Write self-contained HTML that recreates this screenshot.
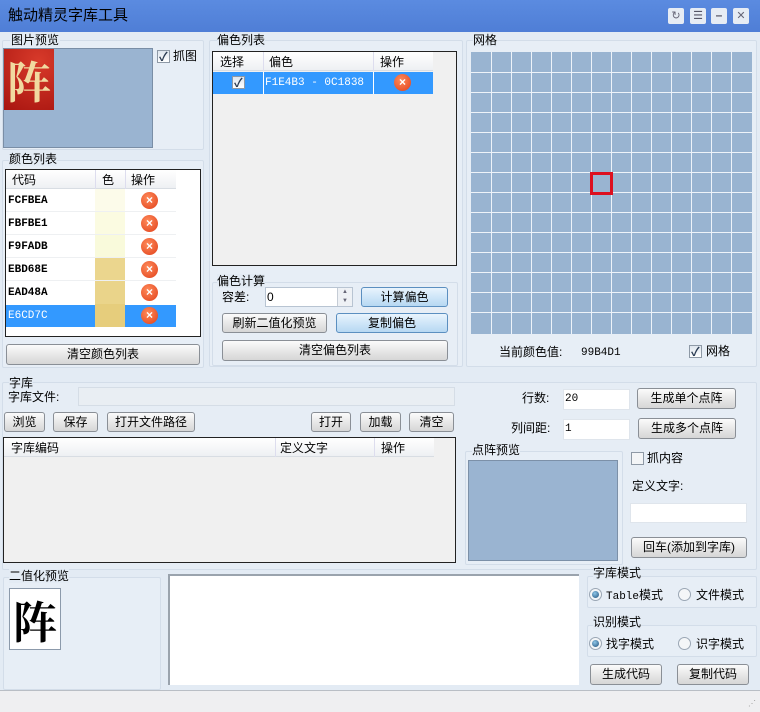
<!DOCTYPE html>
<html><head><meta charset="utf-8"><style>
*{box-sizing:border-box;margin:0;padding:0}
body{width:760px;height:712px;overflow:hidden;background:#e3ebf4;font-family:"Liberation Sans","Noto Sans CJK SC",sans-serif;font-size:12px;color:#000;position:relative}
.a{position:absolute}
.t{position:absolute;white-space:nowrap;line-height:14px}
.grp{position:absolute;border:1px solid #d3dde9;background:#e7eef6;border-radius:2px}
.btn{position:absolute;border:1px solid #8a8f96;border-radius:3px;background:linear-gradient(#fbfbfb,#e8e8e8 50%,#d6d6d6);text-align:center;line-height:18px;white-space:nowrap}
.btn.b{background:linear-gradient(#e9f4fd,#cfe6f8 50%,#b7d8f2);border-color:#5b8fc0}
.inp{position:absolute;background:#fff;border:1px solid #b8c4d2}
.cb{position:absolute;width:13px;height:13px;border:1px solid #8e99a6;background:linear-gradient(#dfe6ee,#fff)}
.cb.c::after{content:"✓";position:absolute;left:1px;top:-3px;font-size:12px;font-weight:bold;color:#2a3b52}
.x{position:absolute;width:17px;height:17px;border-radius:50%;background:radial-gradient(circle at 40% 35%,#ff8a5a,#e0401a);color:#fff;font-weight:bold;font-size:12px;line-height:17px;text-align:center}
.mono{font-family:"Liberation Mono",monospace;font-size:11px}
.hd{position:absolute;background:linear-gradient(#fff,#eef0f3);border-bottom:1px solid #d8dde3}
.rad{position:absolute;width:13px;height:13px;border-radius:50%;border:1px solid #9aa6b4;background:#f4f6f8}
.rad.on::after{content:"";position:absolute;left:2px;top:2px;width:7px;height:7px;border-radius:50%;background:radial-gradient(circle at 40% 35%,#8ec6e8,#1f4f7a)}
</style></head><body>
<!-- title -->
<div class="a" style="left:0;top:0;width:760px;height:32px;background:linear-gradient(#5b8be0,#4f7ed6)"></div>
<div class="t" style="left:8px;top:7px;font-size:15px;line-height:18px">触动精灵字库工具</div>
<div class="a" style="left:668px;top:8px;width:16px;height:16px;background:#e6ecf4;border-radius:2px;font-size:11px;text-align:center;line-height:16px;color:#667">↻</div>
<div class="a" style="left:690px;top:8px;width:16px;height:16px;background:#e6ecf4;border-radius:2px;font-size:11px;text-align:center;line-height:16px;color:#556">☰</div>
<div class="a" style="left:711px;top:8px;width:16px;height:16px;background:#e6ecf4;border-radius:2px;text-align:center;line-height:14px;color:#556;font-weight:bold">–</div>
<div class="a" style="left:733px;top:8px;width:16px;height:16px;background:#e6ecf4;border-radius:2px;font-size:11px;text-align:center;line-height:16px;color:#667">✕</div>

<!-- image preview -->
<div class="grp" style="left:2px;top:40px;width:202px;height:110px"></div>
<div class="t" style="left:10px;top:33px;background:#e3ebf4;padding:0 1px">图片预览</div>
<div class="a" style="left:3px;top:48px;width:150px;height:100px;background:#9ab4d1;border:1px solid #7a8ea6"></div>
<div class="a" style="left:4px;top:49px;width:50px;height:61px;background:radial-gradient(circle at 70% 20%,#d83a2a,#a81510);color:#f1d9a0;font-size:44px;line-height:60px;text-align:center;font-family:'Noto Serif CJK SC',serif;font-weight:bold">阵</div>
<div class="cb c" style="left:157px;top:50px"></div>
<div class="t" style="left:173px;top:49px">抓图</div>

<!-- color list -->
<div class="grp" style="left:2px;top:160px;width:202px;height:208px"></div>
<div class="t" style="left:9px;top:152px;background:#e3ebf4">颜色列表</div>
<div class="a" style="left:5px;top:169px;width:196px;height:168px;background:#fff;border:1px solid #222"></div>
<div class="hd" style="left:6px;top:170px;width:170px;height:19px"></div>
<div class="t" style="left:12px;top:173px">代码</div><div class="t" style="left:102px;top:173px">色</div><div class="t" style="left:131px;top:173px">操作</div>
<div class="a" style="left:95px;top:170px;width:1px;height:19px;background:#dde"></div><div class="a" style="left:125px;top:170px;width:1px;height:19px;background:#dde"></div>
<div id="rows"></div>
<div class="a" style="left:6px;top:305px;width:170px;height:22px;background:#3399ff"></div>
<div class="a" style="left:95px;top:189px;width:30px;height:23px;background:#fcfbea"></div>
<div class="a" style="left:95px;top:212px;width:30px;height:23px;background:#fbfbe1"></div>
<div class="a" style="left:95px;top:235px;width:30px;height:23px;background:#f9fadb"></div>
<div class="a" style="left:95px;top:258px;width:30px;height:23px;background:#ebd68e"></div>
<div class="a" style="left:95px;top:281px;width:30px;height:23px;background:#ead48a"></div>
<div class="a" style="left:95px;top:304px;width:30px;height:23px;background:#e6cd7c"></div>
<div class="a" style="left:6px;top:211px;width:170px;height:1px;background:#eef0f2"></div>
<div class="a" style="left:6px;top:234px;width:170px;height:1px;background:#eef0f2"></div>
<div class="a" style="left:6px;top:257px;width:170px;height:1px;background:#eef0f2"></div>
<div class="a" style="left:6px;top:280px;width:170px;height:1px;background:#eef0f2"></div>
<div class="t mono" style="left:8px;top:194px;font-weight:bold">FCFBEA</div>
<div class="t mono" style="left:8px;top:217px;font-weight:bold">FBFBE1</div>
<div class="t mono" style="left:8px;top:240px;font-weight:bold">F9FADB</div>
<div class="t mono" style="left:8px;top:263px;font-weight:bold">EBD68E</div>
<div class="t mono" style="left:8px;top:286px;font-weight:bold">EAD48A</div>
<div class="t mono" style="left:8px;top:309px;color:#fff">E6CD7C</div>
<div class="x" style="left:141px;top:192px">×</div>
<div class="x" style="left:141px;top:215px">×</div>
<div class="x" style="left:141px;top:238px">×</div>
<div class="x" style="left:141px;top:261px">×</div>
<div class="x" style="left:141px;top:284px">×</div>
<div class="x" style="left:141px;top:307px">×</div>
<div class="btn" style="left:6px;top:344px;width:194px;height:21px">清空颜色列表</div>

<!-- offset list -->
<div class="grp" style="left:209px;top:40px;width:254px;height:327px"></div>
<div class="t" style="left:217px;top:33px;background:#e3ebf4">偏色列表</div>
<div class="a" style="left:212px;top:51px;width:245px;height:215px;background:#f0f0f0;border:1px solid #222"></div>
<div class="hd" style="left:213px;top:52px;width:220px;height:19px"></div>
<div class="t" style="left:220px;top:55px">选择</div><div class="t" style="left:269px;top:55px">偏色</div><div class="t" style="left:380px;top:55px">操作</div>
<div class="a" style="left:263px;top:52px;width:1px;height:19px;background:#dde"></div><div class="a" style="left:373px;top:52px;width:1px;height:19px;background:#dde"></div>
<div class="a" style="left:213px;top:72px;width:220px;height:22px;background:#3399ff"></div>
<div class="a" style="left:263px;top:72px;width:1px;height:22px;background:#fff"></div><div class="a" style="left:373px;top:72px;width:1px;height:22px;background:#fff"></div>
<div class="cb c" style="left:232px;top:76px"></div>
<div class="t mono" style="left:265px;top:76px;color:#fff">F1E4B3 - 0C1838</div>
<div class="x" style="left:394px;top:74px">×</div>

<div class="grp" style="left:212px;top:282px;width:246px;height:84px"></div>
<div class="t" style="left:217px;top:274px;background:#e3ebf4">偏色计算</div>
<div class="t" style="left:222px;top:290px">容差:</div>
<div class="inp" style="left:265px;top:287px;width:88px;height:20px"></div>
<div class="t" style="left:267px;top:290px">0</div>
<div class="a" style="left:337px;top:288px;width:15px;height:18px;background:#eef1f5;border-left:1px solid #c5ccd5;font-size:6px;text-align:center;line-height:9px;color:#667">▲<br>▼</div>
<div class="btn b" style="left:361px;top:287px;width:87px;height:20px">计算偏色</div>
<div class="btn" style="left:222px;top:313px;width:105px;height:20px">刷新二值化预览</div>
<div class="btn b" style="left:336px;top:313px;width:112px;height:20px">复制偏色</div>
<div class="btn" style="left:222px;top:340px;width:226px;height:21px">清空偏色列表</div>

<!-- grid -->
<div class="grp" style="left:466px;top:40px;width:291px;height:327px"></div>
<div class="t" style="left:473px;top:33px;background:#e3ebf4">网格</div>
<svg class="a" style="left:471px;top:52px" width="281" height="282">
<rect width="281" height="282" fill="#99b4d1"/>
<g stroke="#eef3f9" stroke-width="1">
<path d="M20.5 0V282M40.5 0V282M60.5 0V282M80.5 0V282M100.5 0V282M120.5 0V282M140.5 0V282M160.5 0V282M180.5 0V282M200.5 0V282M220.5 0V282M240.5 0V282M260.5 0V282"/>
<path d="M0 20.5H281M0 40.5H281M0 60.5H281M0 80.5H281M0 100.5H281M0 120.5H281M0 140.5H281M0 160.5H281M0 180.5H281M0 200.5H281M0 220.5H281M0 240.5H281M0 260.5H281"/>
</g>
<rect x="120.5" y="121.5" width="20" height="20" fill="none" stroke="#dd1020" stroke-width="3"/>
</svg>
<div class="t" style="left:499px;top:345px">当前颜色值:</div>
<div class="t mono" style="left:581px;top:346px">99B4D1</div>
<div class="cb c" style="left:689px;top:345px"></div>
<div class="t" style="left:706px;top:344px">网格</div>

<!-- library -->
<div class="grp" style="left:2px;top:382px;width:755px;height:188px;background:#e6edf5"></div>
<div class="t" style="left:9px;top:376px;background:#e3ebf4">字库</div>
<div class="t" style="left:8px;top:390px">字库文件:</div>
<div class="a" style="left:78px;top:387px;width:377px;height:19px;background:#e9eef3;border:1px solid #d5dde6"></div>
<div class="btn" style="left:4px;top:412px;width:41px;height:20px">浏览</div>
<div class="btn" style="left:53px;top:412px;width:45px;height:20px">保存</div>
<div class="btn" style="left:107px;top:412px;width:88px;height:20px">打开文件路径</div>
<div class="btn" style="left:311px;top:412px;width:40px;height:20px">打开</div>
<div class="btn" style="left:360px;top:412px;width:41px;height:20px">加载</div>
<div class="btn" style="left:409px;top:412px;width:45px;height:20px">清空</div>
<div class="a" style="left:3px;top:437px;width:453px;height:126px;background:#f0f0f0;border:1px solid #222"></div>
<div class="hd" style="left:4px;top:438px;width:430px;height:19px"></div>
<div class="t" style="left:11px;top:441px">字库编码</div><div class="t" style="left:280px;top:441px">定义文字</div><div class="t" style="left:381px;top:441px">操作</div>
<div class="a" style="left:275px;top:438px;width:1px;height:19px;background:#dde"></div><div class="a" style="left:374px;top:438px;width:1px;height:19px;background:#dde"></div>
<div class="t" style="left:522px;top:391px">行数:</div>
<div class="inp" style="left:563px;top:389px;width:67px;height:21px;border-color:#dfe5ec"></div>
<div class="t mono" style="left:565px;top:392px">20</div>
<div class="btn" style="left:637px;top:388px;width:99px;height:21px">生成单个点阵</div>
<div class="t" style="left:511px;top:421px">列间距:</div>
<div class="inp" style="left:563px;top:419px;width:67px;height:21px;border-color:#dfe5ec"></div>
<div class="t mono" style="left:565px;top:422px">1</div>
<div class="btn" style="left:638px;top:418px;width:98px;height:21px">生成多个点阵</div>
<div class="grp" style="left:465px;top:451px;width:158px;height:114px"></div>
<div class="t" style="left:472px;top:443px;background:#e6edf5">点阵预览</div>
<div class="a" style="left:468px;top:460px;width:150px;height:101px;background:#9ab4d1;border:1px solid #7c90a8"></div>
<div class="cb" style="left:631px;top:452px;background:#f3f5f7"></div>
<div class="t" style="left:647px;top:451px">抓内容</div>
<div class="t" style="left:632px;top:479px">定义文字:</div>
<div class="inp" style="left:630px;top:503px;width:117px;height:20px;border-color:#dfe5ec"></div>
<div class="btn" style="left:631px;top:537px;width:116px;height:21px">回车(添加到字库)</div>

<!-- binary preview -->
<div class="grp" style="left:3px;top:577px;width:158px;height:113px"></div>
<div class="t" style="left:9px;top:569px;background:#e3ebf4">二值化预览</div>
<div class="a" style="left:9px;top:588px;width:52px;height:62px;background:#fff;border:1px solid #8c9aab;font-size:44px;line-height:60px;text-align:center;font-family:'Noto Serif CJK SC',serif;font-weight:bold">阵</div>
<div class="a" style="left:168px;top:574px;width:411px;height:111px;background:#fff;border-top:2px solid #9aa3ad;border-left:2px solid #9aa3ad"></div>

<div class="grp" style="left:587px;top:576px;width:170px;height:32px"></div>
<div class="t" style="left:593px;top:566px;background:#e3ebf4">字库模式</div>
<div class="rad on" style="left:589px;top:588px"></div>
<div class="t" style="left:606px;top:588px"><span class="mono">Table</span>模式</div>
<div class="rad" style="left:678px;top:588px"></div>
<div class="t" style="left:696px;top:588px">文件模式</div>
<div class="grp" style="left:587px;top:625px;width:170px;height:32px"></div>
<div class="t" style="left:593px;top:615px;background:#e3ebf4">识别模式</div>
<div class="rad on" style="left:589px;top:637px"></div>
<div class="t" style="left:606px;top:637px">找字模式</div>
<div class="rad" style="left:678px;top:637px"></div>
<div class="t" style="left:696px;top:637px">识字模式</div>
<div class="btn" style="left:590px;top:664px;width:72px;height:21px">生成代码</div>
<div class="btn" style="left:677px;top:664px;width:72px;height:21px">复制代码</div>

<!-- status bar -->
<div class="a" style="left:0;top:690px;width:760px;height:22px;background:#efeff1;border-top:1px solid #b9bec5"></div>
<div class="t" style="left:748px;top:697px;font-size:8px;color:#999;letter-spacing:-1px">⋰</div>
</body></html>
